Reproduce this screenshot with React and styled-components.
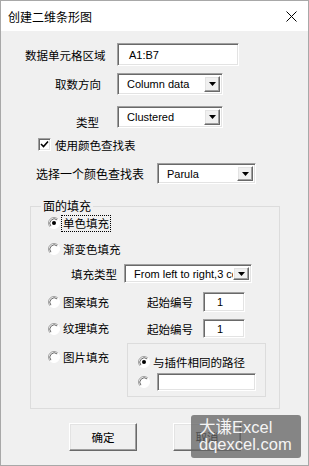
import React from 'react'
import styled, { createGlobalStyle } from 'styled-components'

const GlobalStyle = createGlobalStyle`
  html, body {
    margin: 0;
    padding: 0;
    background: #ffffff;
  }
  body {
    font-family: "Liberation Sans", "Noto Sans CJK SC", sans-serif;
    color: #000;
  }
`

const Window = styled.div`
  position: relative;
  width: 309px;
  height: 466px;
  box-sizing: border-box;
  border: 1px solid #a8a8a8;
  display: flex;
  flex-direction: column;
  background: #f0f0f0;
`

const TitleBar = styled.div`
  height: 30px;
  flex: none;
  background: #ffffff;
  display: flex;
  align-items: center;
  justify-content: space-between;
  padding: 0 11px 0 7px;
  font-family: "Noto Sans CJK SC", sans-serif;
  font-size: 12px;
`

const Body = styled.div`
  flex: 1;
  display: flex;
  flex-direction: column;
`

// one line of the form: label + control
const Row = styled.div`
  display: flex;
  align-items: ${props => props.$align || 'center'};
  height: ${props => props.$height}px;
  margin-top: ${props => props.$top}px;
  padding-left: ${props => props.$left}px;
  flex: none;
`

const Label = styled.span`
  width: ${props => (props.$width ? props.$width + 'px' : 'auto')};
  margin-top: ${props => props.$offset || 0}px;
  font-family: "Noto Sans CJK SC", sans-serif;
  font-size: ${props => props.$size || 11.5}px;
  white-space: nowrap;
  flex: none;
`

const sunken = `
  box-sizing: border-box;
  border: 1px solid;
  border-color: #a0a0a0 #ffffff #ffffff #a0a0a0;
  box-shadow: inset 1px 1px #696969, inset -1px -1px #e3e3e3;
`

const raised = `
  box-sizing: border-box;
  border: 1px solid;
  border-color: #ffffff #696969 #696969 #ffffff;
  box-shadow: inset -1px -1px #a0a0a0, inset 1px 1px #e3e3e3;
  background: #f0f0f0;
`

const TextBox = styled.div`
  ${sunken}
  width: ${props => props.$width}px;
  height: 100%;
  background: #ffffff;
  display: flex;
  align-items: center;
  padding-left: ${props => props.$pad || 11}px;
  font-size: 11px;
  flex: none;
`

const Combo = styled.div`
  ${sunken}
  width: ${props => props.$width}px;
  height: 100%;
  background: #ffffff;
  display: flex;
  align-items: stretch;
  padding: 2px 2px 2px 0;
  flex: none;
`

const ComboText = styled.div`
  flex: 1;
  overflow: hidden;
  white-space: nowrap;
  display: flex;
  align-items: center;
  padding-left: ${props => props.$pad || 9}px;
  font-size: 11px;
`

const DropButton = styled.div`
  ${raised}
  width: 16px;
  flex: none;
  display: flex;
  align-items: center;
  justify-content: center;
`

const Check = styled.div`
  ${sunken}
  width: 13px;
  height: 13px;
  background: #ffffff;
  display: flex;
  align-items: center;
  justify-content: center;
  margin-right: 4px;
  flex: none;
`

const Group = styled.fieldset`
  margin: 14px 28px 0 29px;
  padding: 0 0 11px 0;
  border: 1px solid #dcdcdc;
  min-width: 0;
  display: flex;
  flex-direction: column;
`

const Legend = styled.legend`
  margin-left: 10px;
  padding: 0 2px;
  font-family: "Noto Sans CJK SC", sans-serif;
  font-size: 12px;
  line-height: 16px;
`

const Option = styled.div`
  display: flex;
  align-items: center;
  gap: 1px;
  width: ${props => (props.$width ? props.$width + 'px' : 'auto')};
  height: 18px;
  margin-top: ${props => props.$offset || 0}px;
  flex: none;
`

const OptionText = styled.span`
  font-family: "Noto Sans CJK SC", sans-serif;
  font-size: 11.5px;
  line-height: 15px;
  padding: 0 1px;
  border: 1px ${props => (props.$focus ? 'dotted #000' : 'solid transparent')};
  white-space: nowrap;
`

const PathBox = styled.div`
  box-sizing: border-box;
  width: 139px;
  height: 54px;
  border: 1px solid #dcdcdc;
  display: flex;
  flex-direction: column;
  flex: none;
`

const Buttons = styled.div`
  display: flex;
  gap: 36px;
  padding-left: 68px;
  margin-top: 14px;
`

const Button = styled.div`
  ${raised}
  width: 68px;
  height: 28px;
  display: flex;
  align-items: center;
  justify-content: center;
  font-family: "Noto Sans CJK SC", sans-serif;
  font-size: 11.5px;
`

const Watermark = styled.div`
  position: absolute;
  left: 190px;
  top: 414px;
  width: 110px;
  height: 43px;
  border-radius: 3px;
  background: rgba(98, 98, 98, 0.76);
  color: #f4f4f4;
  font-family: "Liberation Sans", "Noto Sans CJK SC", sans-serif;
  font-size: 16.5px;
  line-height: 17px;
  padding: 4px 0 0 8px;
  box-sizing: border-box;
`

const CloseIcon = () => (
  <svg width="11" height="11" viewBox="0 0 11 11">
    <path d="M0.5 0.5 L10.5 10.5 M10.5 0.5 L0.5 10.5" stroke="#000" strokeWidth="1" fill="none" />
  </svg>
)

const Arrow = () => (
  <svg width="7" height="4" viewBox="0 0 7 4">
    <path d="M0 0 H7 L3.5 4 Z" fill="#000" />
  </svg>
)

const Tick = () => (
  <svg width="9" height="9" viewBox="0 0 9 9">
    <path d="M1 4 L3.5 6.5 L8 1.5" stroke="#000" strokeWidth="1.6" fill="none" />
  </svg>
)

const Radio = ({ on }) => (
  <svg width="12" height="12" viewBox="0 0 12 12" style={{ flex: 'none' }}>
    <circle cx="6" cy="6" r="5.5" fill="#fff" />
    <path d="M2.1 9.9 A5.5 5.5 0 0 1 9.9 2.1" stroke="#a0a0a0" fill="none" />
    <path d="M2.9 9.1 A4.4 4.4 0 0 1 9.1 2.9" stroke="#696969" fill="none" />
    <path d="M9.9 2.1 A5.5 5.5 0 0 1 2.1 9.9" stroke="#ffffff" fill="none" />
    {on && <circle cx="6" cy="6" r="2" fill="#000" />}
  </svg>
)

const Select = ({ width, text, pad }) => (
  <Combo $width={width}>
    <ComboText $pad={pad}>{text}</ComboText>
    <DropButton><Arrow /></DropButton>
  </Combo>
)

const App = () => {
  return (
    <>
      <GlobalStyle />
      <Window>
        <TitleBar>
          <span>创建二维条形图</span>
          <CloseIcon />
        </TitleBar>
        <Body>
          <Row $top={12} $height={23} $left={24}>
            <Label $width={92}>数据单元格区域</Label>
            <TextBox $width={122}>A1:B7</TextBox>
          </Row>
          <Row $top={7} $height={22} $left={54}>
            <Label $width={62}>取数方向</Label>
            <Select width={106} text="Column data" />
          </Row>
          <Row $top={11} $height={22} $left={75}>
            <Label $width={41} $offset={10}>类型</Label>
            <Select width={106} text="Clustered" />
          </Row>
          <Row $top={10} $height={13} $left={37}>
            <Check><Tick /></Check>
            <Label>使用颜色查找表</Label>
          </Row>
          <Row $top={12} $height={21} $left={35}>
            <Label $width={121} $size={12}>选择一个颜色查找表</Label>
            <Select width={99} text="Parula" />
          </Row>

          <Group>
            <Legend>面的填充</Legend>
            <Row $top={0} $height={18} $left={17}>
              <Option>
                <Radio on />
                <OptionText $focus>单色填充</OptionText>
              </Option>
            </Row>
            <Row $top={8} $height={18} $left={17}>
              <Option>
                <Radio />
                <OptionText>渐变色填充</OptionText>
              </Option>
            </Row>
            <Row $top={6} $height={19} $left={40}>
              <Label $width={53}>填充类型</Label>
              <Select width={128} text="From left to right,3 colors" />
            </Row>
            <Row $top={9} $height={20} $left={17}>
              <Option $width={99}>
                <Radio />
                <OptionText>图案填充</OptionText>
              </Option>
              <Label $width={56}>起始编号</Label>
              <TextBox $width={42} $pad={13}>1</TextBox>
            </Row>
            <Row $top={7} $height={19} $left={17}>
              <Option $width={99}>
                <Radio />
                <OptionText>纹理填充</OptionText>
              </Option>
              <Label $width={56}>起始编号</Label>
              <TextBox $width={42} $pad={13}>1</TextBox>
            </Row>
            <Row $top={5} $height={54} $left={17} $align="flex-start">
              <Option $width={79} $offset={5}>
                <Radio />
                <OptionText>图片填充</OptionText>
              </Option>
              <PathBox>
                <Row $top={10} $height={16} $left={10}>
                  <Option>
                    <Radio on />
                    <OptionText>与插件相同的路径</OptionText>
                  </Option>
                </Row>
                <Row $top={3} $height={18} $left={10}>
                  <Radio />
                  <TextBox $width={99} style={{ marginLeft: 7 }} />
                </Row>
              </PathBox>
            </Row>
          </Group>

          <Buttons>
            <Button>确定</Button>
            <Button>取消</Button>
          </Buttons>
        </Body>
        <Watermark>
          <div>大谦Excel</div>
          <div>dqexcel.com</div>
        </Watermark>
      </Window>
    </>
  )
}

export default App
